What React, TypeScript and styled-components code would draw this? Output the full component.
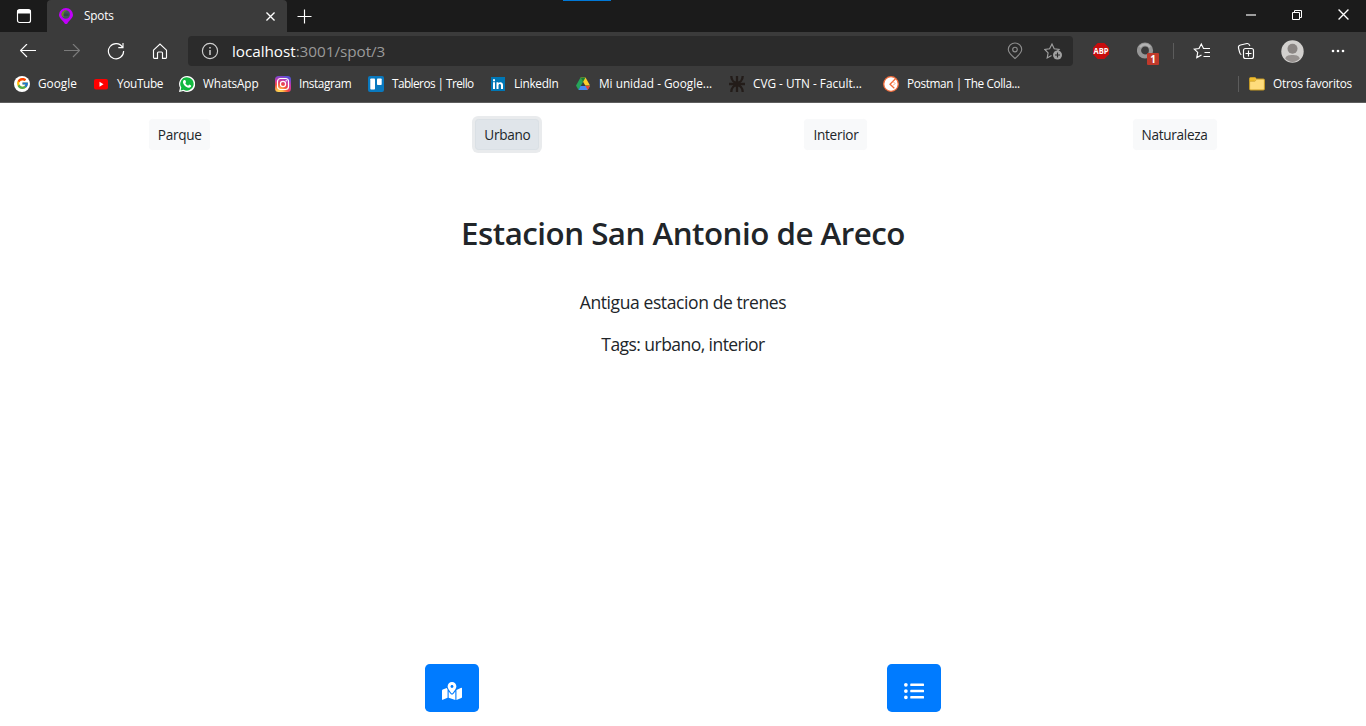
import React from "react";
import styled, { createGlobalStyle } from "styled-components";
import { FcGoogle } from "react-icons/fc";
import { FaListUl, FaMapMarkedAlt } from "react-icons/fa";

const GlobalStyle = createGlobalStyle`
  *, *::before, *::after { box-sizing: border-box; }
  body {
    margin: 0;
    overflow: hidden;
    background: #fff;
    font-family: "Open Sans", "Noto Sans", sans-serif;
  }
  svg { display: block; flex: none; }
  button { font-family: inherit; cursor: pointer; }
`;

const Window = styled.div`
  display: flex;
  flex-direction: column;
  width: 1366px;
  height: 726px;
`;

const TabStrip = styled.header`
  display: flex;
  height: 32px;
  background: #1b1b1b;
  color: #fff;
`;

const TabActions = styled.div`
  display: flex;
  align-items: center;
  justify-content: center;
  width: 47px;
`;

const Tab = styled.div`
  display: flex;
  align-items: center;
  width: 240px;
  padding: 0 12px 0 11px;
  background: #3b3b3b;
  border-radius: 4px 4px 0 0;
`;

const TabTitle = styled.span`
  flex: 1;
  margin-left: 10px;
  padding-bottom: 2px;
  font-size: 11.8px;
  line-height: 16px;
  letter-spacing: -0.2px;
`;

const NewTab = styled.div`
  display: flex;
  align-items: center;
  width: 276px;
  padding-left: 10px;
`;

const LoadingAccent = styled.div`
  width: 48px;
  height: 1px;
  background: #0078d7;
`;

const WindowControls = styled.div`
  display: flex;
  align-items: center;
  height: 29px;
  margin-left: auto;
`;

const WindowButton = styled.div`
  display: flex;
  justify-content: center;
  width: 46px;
`;

const Toolbar = styled.div`
  display: flex;
  align-items: center;
  height: 38px;
  padding-left: 6px;
  background: #3b3b3b;
  color: #fff;
`;

const ToolButton = styled.div<{ $width?: number }>`
  display: flex;
  justify-content: center;
  width: ${(p) => p.$width ?? 44}px;
`;

const AddressBar = styled.div`
  display: flex;
  align-items: center;
  width: 885px;
  height: 30px;
  margin-left: 6px;
  padding: 0 11px 0 13px;
  border-radius: 4px;
  background: #2b2b2b;
`;

const Url = styled.span`
  flex: 1;
  margin-left: 13px;
  font-size: 15.3px;
  line-height: 22px;
  letter-spacing: -0.05px;
  color: #9a9a9a;
  span { color: #fff; }
`;

const AddressIcons = styled.div`
  display: flex;
  gap: 20px;
  align-items: center;
`;

const BadgeHolder = styled.div`
  position: relative;
  width: 18px;
  height: 18px;
`;

const Badge = styled.span`
  position: absolute;
  left: 10px;
  top: 11px;
  width: 12px;
  height: 12px;
  border-radius: 1px;
  background: #c0392b;
  font-size: 10px;
  font-weight: 700;
  line-height: 12px;
  text-align: center;
`;

const Divider = styled.div`
  width: 1px;
  height: 16px;
  background: #5c5c5c;
`;

const BookmarksBar = styled.div`
  display: flex;
  align-items: center;
  height: 33px;
  padding: 0 14px 5px;
  background: #3b3b3b;
  border-bottom: 1px solid #5e5e5e;
  color: #fff;
`;

const Bookmark = styled.div<{ $width?: number }>`
  display: flex;
  align-items: center;
  gap: 8px;
  width: ${(p) => (p.$width ? `${p.$width}px` : "auto")};
  white-space: nowrap;
`;

const BookmarkLabel = styled.span<{ $tracking: number }>`
  padding-bottom: 2px;
  font-size: 11.8px;
  line-height: 16px;
  letter-spacing: ${(p) => p.$tracking}px;
`;

const OtherBookmarks = styled.div`
  display: flex;
  align-items: center;
  gap: 10px;
  width: 114px;
  margin-left: auto;
`;

const Page = styled.main`
  display: flex;
  flex: 1;
  flex-direction: column;
  background: #fff;
  color: #212529;
`;

const CategoryNav = styled.nav`
  display: flex;
  justify-content: space-around;
  padding: 16px 16.8px 0 16.6px;
`;

const CategoryButton = styled.button<{ $width: number; $active?: boolean }>`
  width: ${(p) => p.$width}px;
  height: 31px;
  padding: 0;
  border: 1px solid ${(p) => (p.$active ? "#dae0e5" : "#f8f9fa")};
  border-radius: 3.2px;
  background: ${(p) => (p.$active ? "#e0e5ea" : "#f8f9fa")};
  box-shadow: ${(p) => (p.$active ? "0 0 0 3px #e9ebed" : "none")};
  color: #212529;
  font-size: 13.6px;
  line-height: 21px;
  letter-spacing: -0.3px;
  white-space: nowrap;
`;

const Title = styled.h2`
  margin: 64px 0 0;
  font-size: 31.3px;
  font-weight: 600;
  line-height: 38px;
  letter-spacing: -0.5px;
  text-align: center;
`;

const Description = styled.div`
  display: flex;
  flex-direction: column;
  align-items: center;
  gap: 15px;
  margin-top: 37px;
`;

const Line = styled.p<{ $tracking: number }>`
  margin: 0;
  font-size: 17.5px;
  line-height: 27px;
  letter-spacing: ${(p) => p.$tracking}px;
`;

const BottomNav = styled.footer`
  display: flex;
  justify-content: center;
  gap: 408px;
  margin-top: auto;
  padding-bottom: 14px;
`;

const PrimaryButton = styled.button`
  display: flex;
  align-items: center;
  justify-content: center;
  width: 54px;
  height: 48px;
  padding: 6px 0 0;
  border: 0;
  border-radius: 4.8px;
  background: #007bff;
  color: #fff;
`;

const line = { fill: "none", stroke: "currentColor", strokeWidth: 1.15 } as const;

const TabActionsIcon = () => (
  <svg width="16" height="16" viewBox="0 0 16 16" {...line}>
    <rect x="1.500" y="1.500" width="13" height="13" rx="2" />
    <path d="M2 2.500h12v2.500H2z" fill="currentColor" />
  </svg>
);

const SpotsIcon = () => (
  <svg width="16" height="16" viewBox="0 0 16 16">
    <path d="M8 0a7 7 0 0 0-7 6.800C1 10 4.500 12 6.500 15.300Q8 17 9.500 15.300C11.500 12 15 10 15 6.800A7 7 0 0 0 8 0z" fill="#c000fa" />
    <circle cx="7.800" cy="6.500" r="4.200" fill="#3d5a55" />
    <path d="M3.600 7.500A4.200 4.200 0 0 1 9 2.500L6 4v5z" fill="#698d20" />
    <path d="M5.500 5.500h5v2.500h-5z" fill="#34464c" />
  </svg>
);

const CloseIcon = ({ size = 9 }: { size?: number }) => (
  <svg width={size} height={size} viewBox="0 0 10 10" {...line} strokeWidth={size < 10 ? 1.5 : 1.2}>
    <path d="M.5.5l9 9M9.500.5l-9 9" />
  </svg>
);

const PlusIcon = () => (
  <svg width="15" height="15" viewBox="0 0 15 15" {...line}>
    <path d="M7.500.5v14M.5 7.500h14" />
  </svg>
);

const ArrowIcon = ({ forward }: { forward?: boolean }) => (
  <svg width="16" height="14" viewBox="0 0 16 14" {...line} color={forward ? "#7b7b7b" : "#fff"}>
    <path d={forward ? "M0 6.500h15.500M9 0L15.500 6.500 9 13" : "M16 6.500H.5M7 0L.5 6.500 7 13"} />
  </svg>
);

const RefreshIcon = () => (
  <svg width="18" height="18" viewBox="0 0 18 18" {...line}>
    <path d="M15.500 5.300A7.600 7.600 0 1 0 16.600 9M16 1v4.600h-4.700" />
  </svg>
);

const HomeIcon = () => (
  <svg width="16" height="16" viewBox="0 0 16 16" {...line}>
    <path d="M1.500 7.200L8 1l6.500 6.200v7.300a.8.800 0 0 1-.8.800h-3.200V10a1 1 0 0 0-1-1h-3a1 1 0 0 0-1 1v5.300H2.300a.8.800 0 0 1-.8-.8z" />
  </svg>
);

const InfoIcon = () => (
  <svg width="18" height="18" viewBox="0 0 18 18" {...line} color="#d0d0d0">
    <circle cx="9" cy="9" r="7.600" />
    <path d="M9 8v5M9 5v1.400" strokeWidth="1.500" />
  </svg>
);

const PinIcon = () => (
  <svg width="18" height="18" viewBox="0 0 18 18" {...line} color="#8d8d8d">
    <path d="M9 16.500C5.500 13.500 2.300 10.500 2.300 7.500a6.700 6.500 0 0 1 13.400 0c0 3-3.200 6-6.700 9z" />
    <circle cx="9" cy="7.500" r="2.300" />
  </svg>
);

const AddFavoriteIcon = () => (
  <svg width="18" height="18" viewBox="0 0 18 18" {...line} color="#a0a0a0">
    <path d="M7.500 13.500l-4.300 2.400.9-5L.8 7.400l4.800-.7L8 2l2.200 4.700 4.900.7-2 2" />
    <circle cx="13.500" cy="13" r="4.500" fill="currentColor" stroke="none" />
    <path d="M13.500 10.500v5M11 13h5" stroke="#2b2b2b" />
  </svg>
);

const AdBlockIcon = () => (
  <svg width="16" height="16" viewBox="0 0 16 16">
    <path d="M4.700 0h6.600L16 4.700v6.600L11.300 16H4.700L0 11.300V4.700z" fill="#c70d0d" />
    <text x="8" y="11" textAnchor="middle" textLength="15" fontSize="8.500" fontWeight="700" fill="#fff" lengthAdjust="spacingAndGlyphs">ABP</text>
  </svg>
);

const RingIcon = () => (
  <svg width="18" height="18" viewBox="0 0 18 18" fill="none">
    <circle cx="8" cy="8.500" r="6" stroke="#969696" strokeWidth="4.200" />
    <path d="M3 5.200A6 6 0 0 1 13 5.200" stroke="#b4b4b4" strokeWidth="2" />
  </svg>
);

const FavoritesIcon = () => (
  <svg width="18" height="18" viewBox="0 0 18 18" {...line}>
    <path d="M8.500 13l-4.700 2.600.9-5.200L1.300 7.200l4.700-.7L8.300 2l2.200 4.500H17M11.500 10.500H17M10.500 14.500H17" />
  </svg>
);

const CollectionsIcon = () => (
  <svg width="18" height="18" viewBox="0 0 18 18" {...line}>
    <rect x="6.500" y="6.500" width="10" height="10" rx="2" />
    <path d="M11.500 8.500v6M8.500 11.500h6M4.300 12.700A3 3 0 0 1 2.700 10.500L1.500 6a2.600 2.600 0 0 1 2-3L10 1.500c1.500-.2 2.400.8 2.900 2.400" />
  </svg>
);

const AvatarIcon = () => (
  <svg width="23" height="23" viewBox="0 0 23 23">
    <circle cx="11.500" cy="11.500" r="11.200" fill="#d2d0ce" />
    <circle cx="11.500" cy="8.700" r="5" fill="#8a8583" />
    <path d="M4.200 18.500c1-3 3.500-3.500 7.300-3.500s6.300.5 7.300 3.500c-4 4.500-10.600 4.500-14.600 0z" fill="#979290" />
  </svg>
);

const MoreIcon = () => (
  <svg width="14" height="4" viewBox="0 0 14 4" fill="#fff">
    <circle cx="2" cy="2" r="1.300" /><circle cx="7" cy="2" r="1.300" /><circle cx="12" cy="2" r="1.300" />
  </svg>
);

const GoogleBadge = styled.span`
  display: flex;
  align-items: center;
  justify-content: center;
  width: 16px;
  height: 16px;
  border-radius: 50%;
  background: #fff;
`;

const YouTubeIcon = () => (
  <svg width="16" height="16" viewBox="0 0 16 16">
    <rect x="1" y="3" width="14" height="10.500" rx="2" fill="#f00" />
    <path d="M6.500 5.800v5L10.500 8.300z" fill="#fff" />
  </svg>
);

const WhatsAppIcon = () => (
  <svg width="16" height="16" viewBox="0 0 16 16">
    <path d="M8 0a8 8 0 0 0-7 11.800L0 16l4.300-1A8 8 0 1 0 8 0z" fill="#fff" />
    <path d="M8 1.200a6.700 6.700 0 0 0-5.700 10.300l-.7 2.900 3-.7A6.700 6.700 0 1 0 8 1.200z" fill="#12b83f" />
    <path d="M5.200 4l1 .1.900 2-.8 1.100c.8 1.300 1.500 1.900 2.900 2.500l.9-1.100 2 .9c.3 1.500-1.200 2.400-2.400 2.200C6.700 11.200 4.300 8.400 4 6.400 3.900 5.300 4.500 4.200 5.200 4z" fill="#fff" />
  </svg>
);

const InstagramIcon = () => (
  <svg width="16" height="16" viewBox="0 0 16 16" fill="none">
    <defs>
      <radialGradient id="insta" cx=".27" cy="1.050" r="1.100">
        <stop offset="0" stopColor="#fd5" /><stop offset=".2" stopColor="#ffc04a" />
        <stop offset=".5" stopColor="#f0443f" /><stop offset=".75" stopColor="#c837ab" />
        <stop offset="1" stopColor="#5b50d6" />
      </radialGradient>
    </defs>
    <rect width="16" height="16" rx="3.500" fill="url(#insta)" />
    <rect x="2.500" y="2.500" width="11" height="11" rx="3" stroke="#fff" strokeWidth="1.200" />
    <circle cx="8" cy="8" r="2.600" stroke="#fff" strokeWidth="1.200" />
    <circle cx="11.200" cy="4.800" r=".7" fill="#fff" />
  </svg>
);

const TrelloIcon = () => (
  <svg width="16" height="16" viewBox="0 0 16 16">
    <rect width="16" height="16" rx="2" fill="#0979bf" />
    <rect x="2.300" y="2.500" width="4.700" height="11" rx=".8" fill="#fff" />
    <rect x="9" y="2.500" width="4.700" height="6.500" rx=".8" fill="#fff" />
  </svg>
);

const LinkedInIcon = () => (
  <svg width="16" height="16" viewBox="0 0 16 16">
    <rect x="1" y="1" width="14" height="14" fill="#0077b5" />
    <path d="M3 6.300h2V13H3zM3 3.300h2v1.900H3zM6.500 6.300h2v1c1-1.700 4.500-1.600 4.500 1.700v4h-2V9.500c0-2-2.500-2-2.500 0V13h-2z" fill="#fff" />
  </svg>
);

const DriveIcon = () => (
  <svg width="16" height="16" viewBox="0 0 16 16">
    <path d="M5.500 1.500L1 9.500l2.500 4.500L8 6z" fill="#25a45a" />
    <path d="M5.500 1.500h5L15 9.500h-4.700z" fill="#ffcd28" />
    <path d="M5.500 1.500h5L8 6z" fill="#188038" />
    <path d="M5.500 10H15l-2.500 4h-9z" fill="#4688f4" />
    <path d="M10.500 10H15l-2.300 4z" fill="#ea4335" />
  </svg>
);

const UtnIcon = () => (
  <svg width="16" height="16" viewBox="0 0 16 16" fill="none" stroke="#231c19" strokeWidth="2.300">
    <path d="M8 0v16M0 8h16M2.300 0C2.300 9 13.700 9 13.700 0M2.300 16C2.300 7 13.700 7 13.700 16" />
  </svg>
);

const PostmanIcon = () => (
  <svg width="16" height="16" viewBox="0 0 16 16" fill="none">
    <circle cx="8" cy="8" r="7.300" fill="#fff" stroke="#f26b3a" strokeWidth="1.300" />
    <path d="M12.500 2.800L7 8.300l4.300 4" stroke="#f26b3a" strokeWidth="1.300" />
    <path d="M10 5.500l2 2-2 2" stroke="#f5a080" />
  </svg>
);

const FolderIcon = () => (
  <svg width="16" height="16" viewBox="0 0 16 16">
    <path d="M.6 2.500q0-1 1-1H6L7.600 3h6.800q1 0 1 1v9q0 1-1 1H1.600q-1 0-1-1z" fill="#ffdc7c" stroke="#c89b22" />
    <path d="M.9 2h5l1.300 1.300L5.500 5H.9z" fill="#eebc2f" />
    <path d="M1 5.300h4.800L7.500 3.700" stroke="#c89b22" strokeWidth=".7" fill="none" />
  </svg>
);

const bookmarks = [
  { label: "Google", width: 79, tracking: 0, icon: <GoogleBadge><FcGoogle size={13} /></GoogleBadge> },
  { label: "YouTube", width: 86, tracking: -0.35, icon: <YouTubeIcon /> },
  { label: "WhatsApp", width: 96, tracking: -0.1, icon: <WhatsAppIcon /> },
  { label: "Instagram", width: 93, tracking: -0.38, icon: <InstagramIcon /> },
  { label: "Tableros | Trello", width: 122, tracking: -0.55, icon: <TrelloIcon /> },
  { label: "LinkedIn", width: 85, tracking: -0.3, icon: <LinkedInIcon /> },
  { label: "Mi unidad - Google...", width: 154, tracking: 0, icon: <DriveIcon /> },
  { label: "CVG - UTN - Facult...", width: 154, tracking: 0, icon: <UtnIcon /> },
  { label: "Postman | The Colla...", width: 140, tracking: -0.38, icon: <PostmanIcon /> },
];

const categories = [
  { label: "Parque", width: 61 },
  { label: "Urbano", width: 64, active: true },
  { label: "Interior", width: 63 },
  { label: "Naturaleza", width: 84 },
];

export default function App() {
  return (
    <Window>
      <GlobalStyle />
      <TabStrip>
        <TabActions><TabActionsIcon /></TabActions>
        <Tab>
          <SpotsIcon />
          <TabTitle>Spots</TabTitle>
          <CloseIcon />
        </Tab>
        <NewTab><PlusIcon /></NewTab>
        <LoadingAccent />
        <WindowControls>
          <WindowButton>
            <svg width="10" height="10" viewBox="0 0 10 10" {...line}><path d="M0 5h10" /></svg>
          </WindowButton>
          <WindowButton>
            <svg width="10" height="10" viewBox="0 0 10 10" {...line} strokeWidth={1}>
              <path d="M.5 2.500h7v7h-7zM2.500 2.500v-2h7v7h-2" />
            </svg>
          </WindowButton>
          <WindowButton><CloseIcon size={11} /></WindowButton>
        </WindowControls>
      </TabStrip>

      <Toolbar>
        <ToolButton><ArrowIcon /></ToolButton>
        <ToolButton><ArrowIcon forward /></ToolButton>
        <ToolButton><RefreshIcon /></ToolButton>
        <ToolButton><HomeIcon /></ToolButton>
        <AddressBar>
          <InfoIcon />
          <Url><span>localhost</span>:3001/spot/3</Url>
          <AddressIcons>
            <PinIcon />
            <AddFavoriteIcon />
          </AddressIcons>
        </AddressBar>
        <ToolButton $width={56}><AdBlockIcon /></ToolButton>
        <ToolButton $width={34}>
          <BadgeHolder>
            <RingIcon />
            <Badge>1</Badge>
          </BadgeHolder>
        </ToolButton>
        <ToolButton $width={21}><Divider /></ToolButton>
        <ToolButton $width={36}><FavoritesIcon /></ToolButton>
        <ToolButton $width={52}><CollectionsIcon /></ToolButton>
        <ToolButton $width={40}><AvatarIcon /></ToolButton>
        <ToolButton $width={52}><MoreIcon /></ToolButton>
      </Toolbar>

      <BookmarksBar>
        {bookmarks.map((b) => (
          <Bookmark key={b.label} $width={b.width}>
            {b.icon}
            <BookmarkLabel $tracking={b.tracking}>{b.label}</BookmarkLabel>
          </Bookmark>
        ))}
        <OtherBookmarks>
          <Divider />
          <Bookmark>
            <FolderIcon />
            <BookmarkLabel $tracking={-0.22}>Otros favoritos</BookmarkLabel>
          </Bookmark>
        </OtherBookmarks>
      </BookmarksBar>

      <Page>
        <CategoryNav>
          {categories.map((c) => (
            <CategoryButton key={c.label} $width={c.width} $active={c.active}>
              {c.label}
            </CategoryButton>
          ))}
        </CategoryNav>
        <Title>Estacion San Antonio de Areco</Title>
        <Description>
          <Line $tracking={-0.4}>Antigua estacion de trenes</Line>
          <Line $tracking={-0.55}>Tags: urbano, interior</Line>
        </Description>
        <BottomNav>
          <PrimaryButton aria-label="Mapa"><FaMapMarkedAlt size={20} /></PrimaryButton>
          <PrimaryButton aria-label="Lista"><FaListUl size={20} /></PrimaryButton>
        </BottomNav>
      </Page>
    </Window>
  );
}
